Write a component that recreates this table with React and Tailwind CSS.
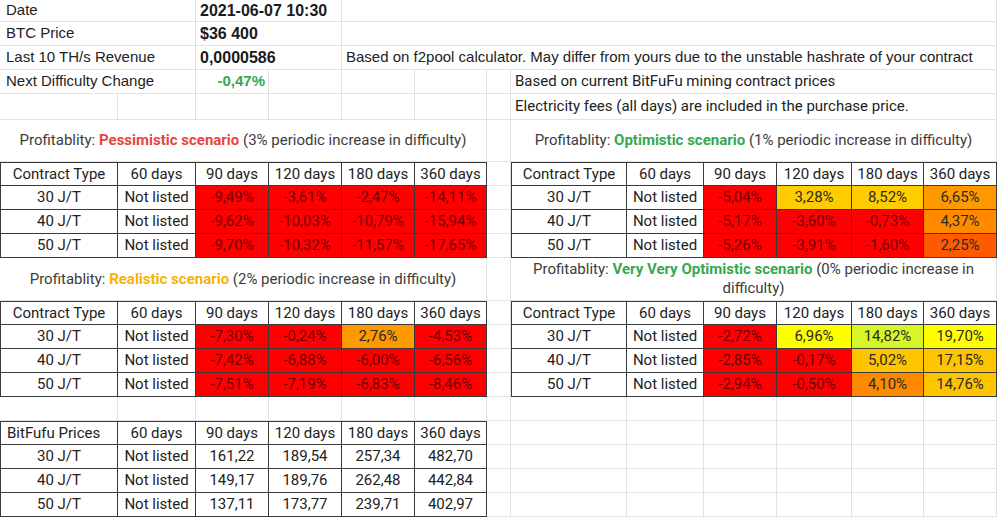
import React from "react";

const GRID_COLS =
  "grid-cols-[118px_78px_73px_73px_73px_72px_24px_116px_77px_73px_75px_72px_73px]";
const GRID_ROWS =
  "grid-rows-[22px_24px_24px_24px_26px_42px_24px_24px_24px_24px_43px_24px_24px_24px_24px_24px_24px_24px_24px_24px]";

const SPAN = {
  1: "col-span-1",
  2: "col-span-2",
  6: "col-span-6",
  9: "col-span-9",
};

const SANS = "font-['Liberation_Sans',Arial,sans-serif]";
const ROBOTO = "font-['Roboto','Noto_Sans',sans-serif]";

// cell fills, same shades as the sheet's conditional formatting
const RED = "bg-[#ff0000] text-[#6e0000]";
const AMBER = "bg-[#ffcc00] text-[#2a2a2a]";
const GOLD = "bg-[#ffc400] text-[#2a2a2a]";
const ORANGE = "bg-[#ff9900] text-[#2a2a2a]";
const DARK_ORANGE = "bg-[#ff8a00] text-[#2a2a2a]";
const RED_ORANGE = "bg-[#ff5a00] text-[#2a2a2a]";
const YELLOW = "bg-[#ffff00] text-[#2a2a2a]";
const LIME = "bg-[#d7f529] text-[#2a2a2a]";

const HEADERS = ["60 days", "90 days", "120 days", "180 days", "360 days"];

const pessimistic = [
  ["30 J/T", [["-9,49%", RED], ["-3,61%", RED], ["-2,47%", RED], ["-14,11%", RED]]],
  ["40 J/T", [["-9,62%", RED], ["-10,03%", RED], ["-10,79%", RED], ["-15,94%", RED]]],
  ["50 J/T", [["-9,70%", RED], ["-10,32%", RED], ["-11,57%", RED], ["-17,65%", RED]]],
];

const optimistic = [
  ["30 J/T", [["-5,04%", RED], ["3,28%", AMBER], ["8,52%", AMBER], ["6,65%", ORANGE]]],
  ["40 J/T", [["-5,17%", RED], ["-3,60%", RED], ["-0,73%", RED], ["4,37%", DARK_ORANGE]]],
  ["50 J/T", [["-5,26%", RED], ["-3,91%", RED], ["-1,60%", RED], ["2,25%", RED_ORANGE]]],
];

const realistic = [
  ["30 J/T", [["-7,30%", RED], ["-0,24%", RED], ["2,76%", ORANGE], ["-4,53%", RED]]],
  ["40 J/T", [["-7,42%", RED], ["-6,88%", RED], ["-6,00%", RED], ["-6,56%", RED]]],
  ["50 J/T", [["-7,51%", RED], ["-7,19%", RED], ["-6,83%", RED], ["-8,46%", RED]]],
];

const veryOptimistic = [
  ["30 J/T", [["-2,72%", RED], ["6,96%", YELLOW], ["14,82%", LIME], ["19,70%", YELLOW]]],
  ["40 J/T", [["-2,85%", RED], ["-0,17%", RED], ["5,02%", GOLD], ["17,15%", GOLD]]],
  ["50 J/T", [["-2,94%", RED], ["-0,50%", RED], ["4,10%", DARK_ORANGE], ["14,76%", GOLD]]],
];

const prices = [
  ["30 J/T", [["161,22"], ["189,54"], ["257,34"], ["482,70"]]],
  ["40 J/T", [["149,17"], ["189,76"], ["262,48"], ["442,84"]]],
  ["50 J/T", [["137,11"], ["173,77"], ["239,71"], ["402,97"]]],
];

const Cell = ({ span = 1, className = "", children }) => (
  <div
    className={`${SPAN[span]} flex items-center overflow-hidden whitespace-nowrap border-r border-b border-[#e2e2e2] ${className}`}
  >
    {children}
  </div>
);

const Empty = () => <Cell />;

// table cell: dark border, centred text
const TCell = ({ first, top, className = "text-[#222]", children }) => (
  <div
    className={`flex items-center justify-center overflow-hidden whitespace-nowrap border-r border-b border-[#3a3a3a] ${ROBOTO} text-[15px] ${
      first ? "border-l" : ""
    } ${top ? "border-t" : ""} ${className}`}
  >
    {children}
  </div>
);

// a table row = 6 cells, rendered as fragment so they flow into the sheet grid
const headerRow = (label, leftAlign) => (
  <>
    <TCell first top className={`text-[#222] ${leftAlign ? "justify-start pl-[6px]" : ""}`}>
      {label}
    </TCell>
    {HEADERS.map((h) => (
      <TCell key={h} top>
        {h}
      </TCell>
    ))}
  </>
);

const bodyRow = ([label, values]) => (
  <>
    <TCell first>{label}</TCell>
    <TCell>Not listed</TCell>
    {values.map(([v, color]) => (
      <TCell key={v} className={color || "text-[#222]"}>
        {v}
      </TCell>
    ))}
  </>
);

const Title = ({ label, color, rest }) => (
  <Cell span={6} className={`justify-center ${ROBOTO} text-[15px] text-[#3c3c3c]`}>
    <span>
      Profitablity: <span className={`font-bold ${color}`}>{label}</span> {rest}
    </span>
  </Cell>
);

const App = () => {
  const sheetText = `${SANS} text-[15px] text-[#222] px-[6px]`;
  const boldVal = `${SANS} text-[16px] font-bold text-[#1a1a1a] pl-[4px]`;

  return (
    <div className="w-[1000px] h-[519px] bg-white overflow-hidden">
      <div className={`grid ${GRID_COLS} ${GRID_ROWS} w-[997px]`}>
        {/* row 1 */}
        <Cell span={2} className={sheetText}>Date</Cell>
        <Cell span={2} className={boldVal}>2021-06-07 10:30</Cell>
        <Cell span={9} />

        {/* row 2 */}
        <Cell span={2} className={sheetText}>BTC Price</Cell>
        <Cell span={2} className={boldVal}>$36 400</Cell>
        <Cell span={9} />

        {/* row 3 */}
        <Cell span={2} className={sheetText}>Last 10 TH/s Revenue</Cell>
        <Cell span={2} className={boldVal}>0,0000586</Cell>
        <Cell span={9} className={`${SANS} text-[15px] text-[#222] pl-[4px]`}>
          Based on f2pool calculator. May differ from yours due to the unstable hashrate of your contract
        </Cell>

        {/* row 4 */}
        <Cell span={2} className={sheetText}>Next Difficulty Change</Cell>
        <Cell className={`${SANS} text-[15px] font-bold text-[#34a853] justify-end pr-[3px]`}>-0,47%</Cell>
        <Empty />
        <Empty />
        <Empty />
        <Empty />
        <Cell span={6} className={`${ROBOTO} text-[15px] text-[#222] pl-[4px]`}>
          Based on current BitFuFu mining contract prices
        </Cell>

        {/* row 5 */}
        <Empty />
        <Empty />
        <Empty />
        <Empty />
        <Empty />
        <Empty />
        <Empty />
        <Cell span={6} className={`${ROBOTO} text-[15px] text-[#222] pl-[4px]`}>
          Electricity fees (all days) are included in the purchase price.
        </Cell>

        {/* row 6: titles */}
        <Title
          label="Pessimistic scenario"
          color="text-[#e8453c]"
          rest="(3% periodic increase in difficulty)"
        />
        <Empty />
        <Title
          label="Optimistic scenario"
          color="text-[#34a853]"
          rest="(1% periodic increase in difficulty)"
        />

        {/* rows 7-10 */}
        {headerRow("Contract Type")}
        <Empty />
        {headerRow("Contract Type")}
        {pessimistic.map((row, i) => (
          <React.Fragment key={row[0]}>
            {bodyRow(row)}
            <Empty />
            {bodyRow(optimistic[i])}
          </React.Fragment>
        ))}

        {/* row 11: titles */}
        <Title
          label="Realistic scenario"
          color="text-[#f6b400]"
          rest="(2% periodic increase in difficulty)"
        />
        <Empty />
        <Cell
          span={6}
          className={`justify-center text-center whitespace-normal leading-[19px] ${ROBOTO} text-[15px] text-[#3c3c3c]`}
        >
          <span>
            Profitablity:{" "}
            <span className="font-bold text-[#34a853]">Very Very Optimistic scenario</span>{" "}
            (0% periodic increase in
            <br />
            difficulty)
          </span>
        </Cell>

        {/* rows 12-15 */}
        {headerRow("Contract Type")}
        <Empty />
        {headerRow("Contract Type")}
        {realistic.map((row, i) => (
          <React.Fragment key={row[0]}>
            {bodyRow(row)}
            <Empty />
            {bodyRow(veryOptimistic[i])}
          </React.Fragment>
        ))}

        {/* row 16: blank */}
        {Array.from({ length: 13 }).map((_, i) => (
          <Empty key={i} />
        ))}

        {/* rows 17-20: price table */}
        {headerRow("BitFufu Prices", true)}
        {Array.from({ length: 7 }).map((_, i) => (
          <Empty key={i} />
        ))}
        {prices.map((row) => (
          <React.Fragment key={row[0]}>
            {bodyRow(row)}
            {Array.from({ length: 7 }).map((_, i) => (
              <Empty key={i} />
            ))}
          </React.Fragment>
        ))}
      </div>
    </div>
  );
};

export default App;
